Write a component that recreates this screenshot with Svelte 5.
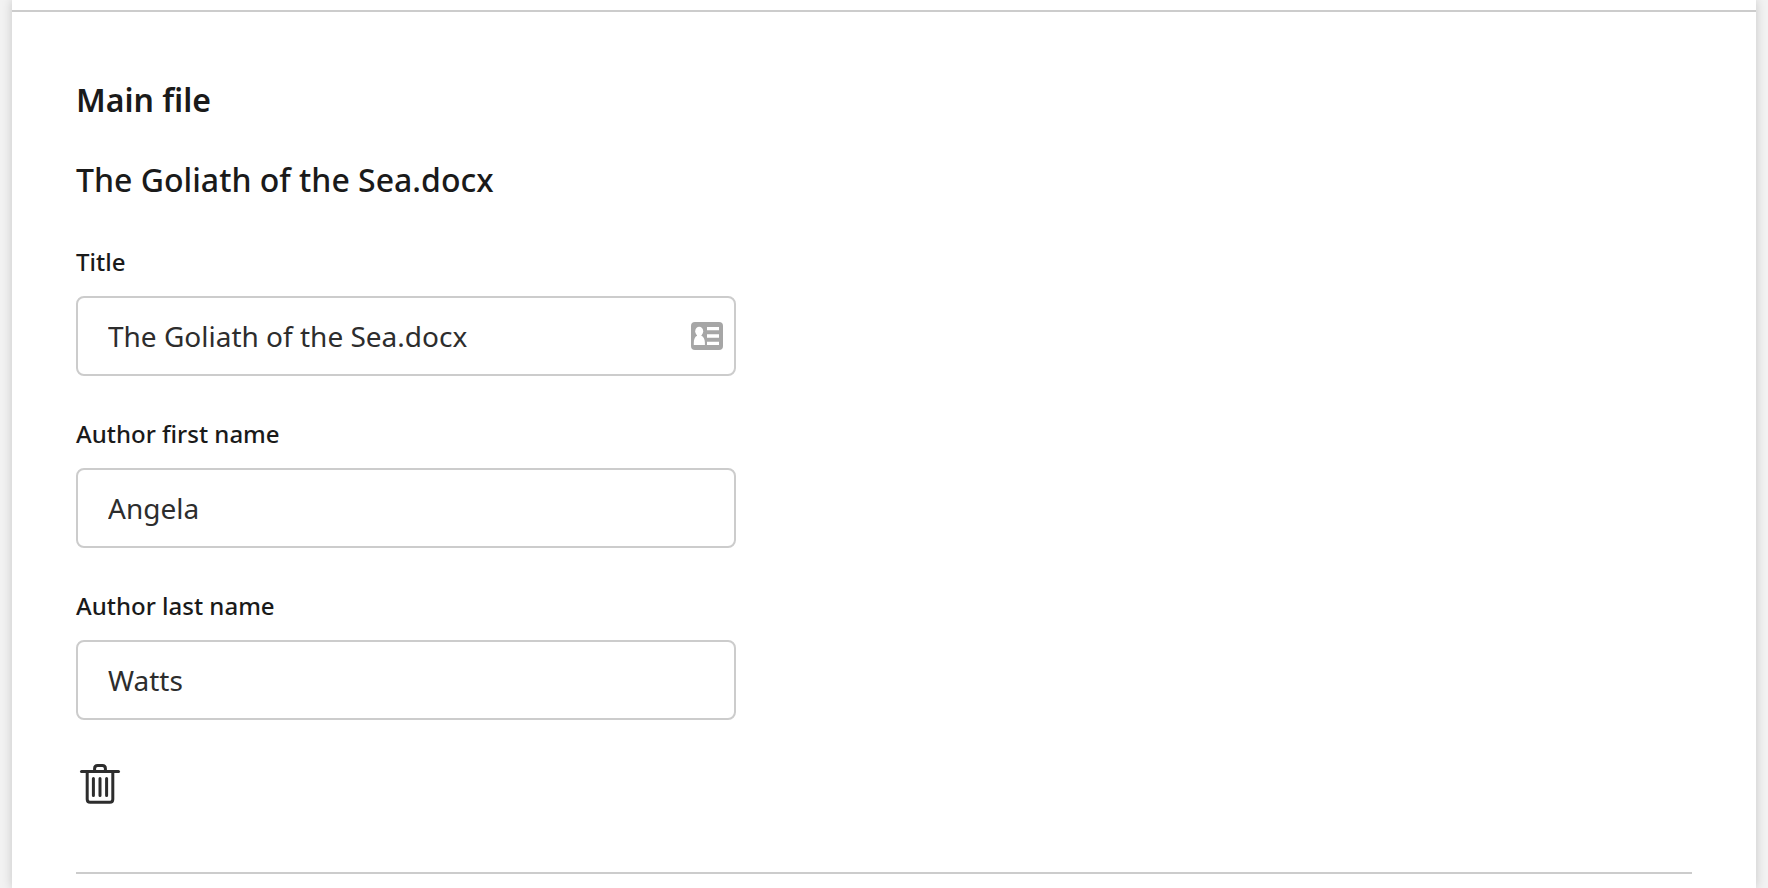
<script>
  let fields = $state([
    { id: 'title', label: 'Title', value: 'The Goliath of the Sea.docx', contact: true },
    { id: 'first-name', label: 'Author first name', value: 'Angela' },
    { id: 'last-name', label: 'Author last name', value: 'Watts' }
  ]);

  const clearFields = () => {
    fields.forEach((field) => (field.value = ''));
  };
</script>

<main class="panel">
  <section class="file">
    <h2>Main file</h2>
    <h3>The Goliath of the Sea.docx</h3>

    <form>
      {#each fields as field (field.id)}
        <div class="field">
          <label for={field.id}>{field.label}</label>
          <div class="control">
            <input id={field.id} type="text" bind:value={field.value} />
            {#if field.contact}
              <svg class="contact" viewBox="0 0 32 28" aria-hidden="true">
                <rect width="32" height="28" rx="4" fill="#a6a6a6" />
                <ellipse cx="8.200" cy="9.300" rx="4" ry="4.600" fill="#fff" />
                <path
                  d="M6 12.500h4.400v1.300c2.300 1 3.500 4 3.500 7V23H2.800v-2.200c0-3 1-6 3.200-7z"
                  fill="#fff"
                />
                <path d="M16 6.700h12M16 14h12M16 21.300h12" stroke="#fff" stroke-width="3.300" />
              </svg>
            {/if}
          </div>
        </div>
      {/each}

      <button type="button" aria-label="Delete file" onclick={clearFields}>
        <svg viewBox="0 2 48 44" aria-hidden="true">
          <path d="M5.500 11.400h37" />
          <path d="M18.600 11V8.500q0-3 3-3h4.800q3 0 3 3V11" />
          <path d="M11.200 12v27.300q0 3 3 3h19.600q3 0 3-3V12" />
          <path d="M17.400 18.500v17M24 18.500v17M30.600 18.500v17" />
        </svg>
      </button>
    </form>
  </section>
</main>

<style>
  :global(body) {
    margin: 0;
    background: #f2f2f2;
    overflow-x: hidden;
  }

  .panel {
    box-sizing: border-box;
    min-height: 100vh;
    margin: 0 12px;
    padding-top: 10px;
    background: #fff;
    box-shadow: 0 0 10px rgba(0, 0, 0, 0.18);
    font-family: 'Noto Sans', 'Open Sans', sans-serif;
    color: #1a1a1a;
  }

  .file {
    padding: 68px 64px 0;
    border-top: 2px solid #ccc;
  }

  h2,
  h3 {
    margin: 0 0 40px;
    font-size: 32px;
    line-height: 40px;
    font-weight: 600;
  }
  h3 {
    margin-bottom: 46px;
    font-weight: 500;
  }

  form {
    border-bottom: 2px solid #ccc;
    padding-bottom: 66px;
  }

  .field {
    max-width: 660px;
    margin-bottom: 42px;
  }
  label {
    display: block;
    width: fit-content;
    margin-bottom: 18px;
    font-size: 24px;
    line-height: 32px;
    font-weight: 500;
  }
  .control {
    position: relative;
  }
  input {
    display: block;
    box-sizing: border-box;
    width: 100%;
    height: 80px;
    padding: 0 56px 0 30px;
    border: 2px solid #ccc;
    border-radius: 8px;
    background: #fff;
    font-family: inherit;
    font-size: 28px;
    color: #2d2d2d;
  }
  .contact {
    position: absolute;
    top: 26px;
    right: 13px;
    width: 32px;
    height: 28px;
  }

  button {
    display: block;
    width: 48px;
    height: 44px;
    padding: 0;
    border: none;
    background: none;
    cursor: pointer;
  }
  button svg {
    display: block;
    fill: none;
    stroke: #2d2d2d;
    stroke-width: 3;
    stroke-linecap: round;
  }
</style>
